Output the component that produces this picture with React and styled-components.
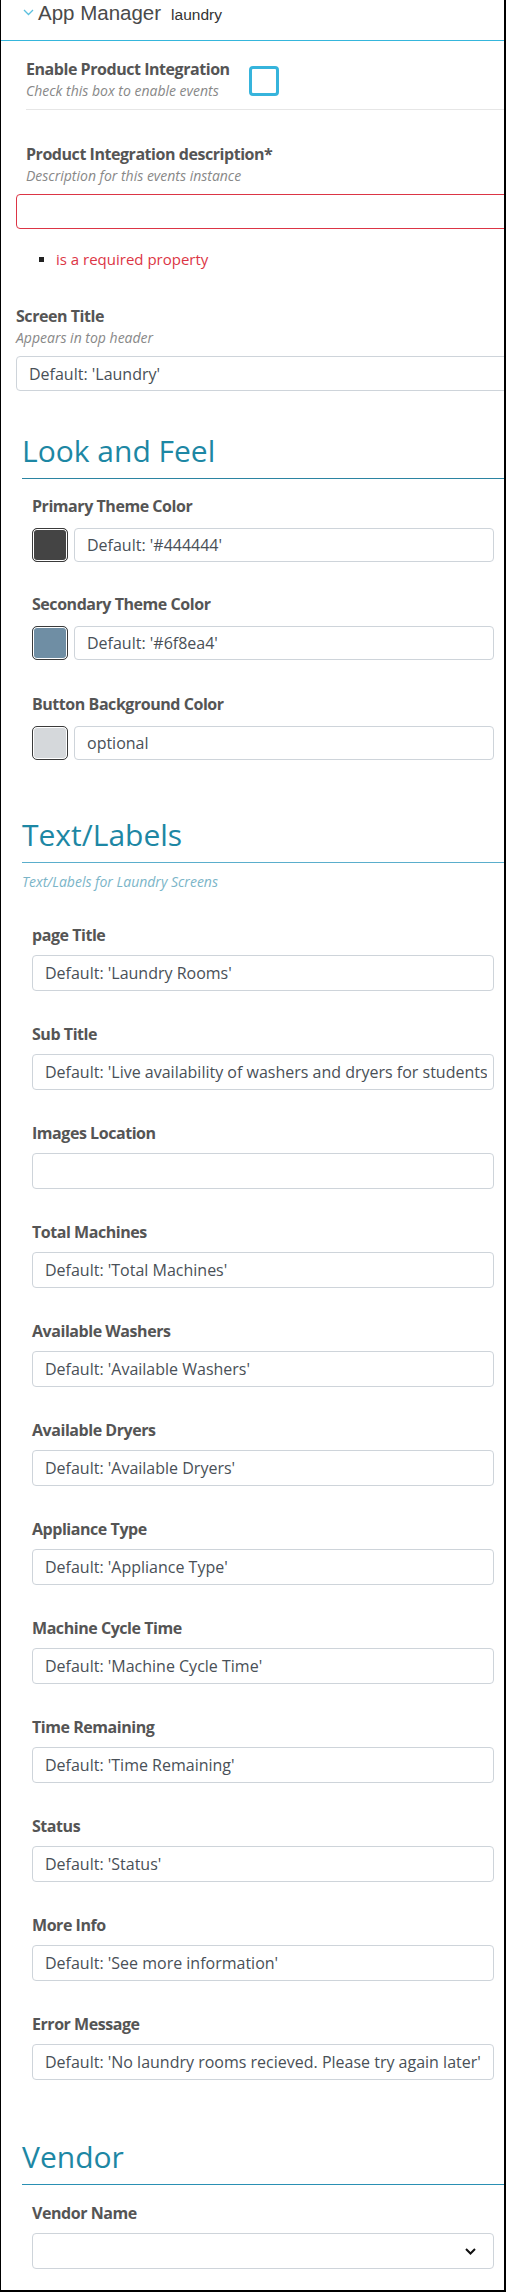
import React from 'react';
import styled, { createGlobalStyle } from 'styled-components';

const GlobalStyle = createGlobalStyle`
  html, body {
    margin: 0;
    padding: 0;
    background: #fff;
  }
  body {
    font-family: 'Open Sans', 'Noto Sans', sans-serif;
  }
  * {
    box-sizing: border-box;
  }
`;

const Frame = styled.div`
  width: 506px;
  height: 2292px;
  border-left: 1px solid #000;
  border-right: 2px solid #000;
  border-bottom: 2px solid #000;
  overflow: hidden;
  background: #fff;
`;

// header bar
const Header = styled.div`
  height: 41px;
  padding: 1px 0 0 22px;
  display: flex;
  align-items: baseline;
  border-bottom: 1px solid #35b6dc;
  font-family: 'Liberation Sans', Arial, sans-serif;
`;

const Chevron = styled.svg`
  width: 11px;
  height: 7px;
  margin-right: 4px;
  align-self: flex-start;
  margin-top: 8px;
`;

const AppTitle = styled.span`
  font-size: 20.5px;
  line-height: 24px;
  color: #4a4a4a;
`;

const AppSub = styled.span`
  font-size: 15.5px;
  line-height: 24px;
  color: #333;
  margin-left: 10px;
`;

const Body = styled.div`
  padding-left: 15px;
`;

const CheckRow = styled.div`
  margin: 18px 0 0 10px;
  padding-bottom: 9px;
  display: flex;
  align-items: flex-start;
  border-bottom: 1px solid #e6e6e6;
`;

const CheckText = styled.div`
  width: 223px;
`;

const CheckBox = styled.span`
  width: 30px;
  height: 30px;
  margin-top: 7px;
  border: 3px solid #36b4dc;
  border-radius: 4px;
`;

const Field = styled.div`
  margin-top: ${(p) => p.$top}px;
`;

const Label = styled.div`
  font-size: 16px;
  font-weight: 700;
  line-height: 20px;
  letter-spacing: -0.45px;
  color: #555;
  padding-left: ${(p) => p.$indent || 0}px;
`;

const Help = styled.div`
  margin-top: 3px;
  font-size: 14px;
  font-style: italic;
  line-height: 18px;
  color: #888;
  padding-left: ${(p) => p.$indent || 0}px;
`;

const TextInput = styled.input`
  display: block;
  flex: 1;
  min-width: 0;
  width: ${(p) => (p.$wide ? 'calc(100% + 30px)' : '100%')};
  height: ${(p) => p.$h ?? 36}px;
  margin-top: ${(p) => p.$mt ?? 10}px;
  padding: 0 6px 0 12px;
  border: 1px solid ${(p) => (p.$error ? '#dc3545' : '#ced4da')};
  border-radius: 4px;
  font-family: 'Open Sans', sans-serif;
  font-size: 16px;
  color: #495057;
  background: #fff;
  outline: none;

  &::placeholder {
    color: #495057;
    opacity: 1;
  }
`;

const ErrorList = styled.ul`
  margin: 20px 0 0;
  padding-left: 40px;
  list-style: square;

  li {
    font-size: 15px;
    line-height: 20px;
    color: #dc3545;
  }
  li::marker {
    color: #222;
    font-size: 14px;
  }
`;

const Section = styled.div`
  margin-top: ${(p) => p.$top}px;
  margin-left: 6px;
`;

const SectionTitle = styled.h2`
  margin: 0;
  padding-bottom: 9px;
  font-size: 30px;
  font-weight: 400;
  line-height: 36px;
  color: #1d87a4;
  border-bottom: 1px solid ${(p) => p.$line || '#2b84a2'};
`;

const SectionNote = styled.div`
  margin-top: 10px;
  font-size: 14px;
  font-style: italic;
  line-height: 18px;
  color: #7bb5c8;
`;

const Fields = styled.div`
  padding: 0 10px 0 10px;
`;

const ColorRow = styled.div`
  margin-top: 12px;
  display: flex;
  gap: 6px;
`;

const Swatch = styled.span`
  flex: 0 0 36px;
  height: 34px;
  border: 1px solid #3a3a3a;
  border-radius: 5px;
  background: ${(p) => p.$color};
  box-shadow: inset 0 0 0 1px #fff;
`;

const SelectBox = styled.div`
  margin-top: 10px;
  height: 36px;
  padding-right: 17px;
  display: flex;
  align-items: center;
  justify-content: flex-end;
  border: 1px solid #ced4da;
  border-radius: 4px;
`;

const colorFields = [
  { label: 'Primary Theme Color', color: '#444444', text: "Default: '#444444'", top: 17 },
  { label: 'Secondary Theme Color', color: '#6f8ea4', text: "Default: '#6f8ea4'", top: 32 },
  { label: 'Button Background Color', color: '#d5d8db', text: 'optional', top: 34 },
];

const textFields = [
  ['page Title', "Default: 'Laundry Rooms'"],
  ['Sub Title', "Default: 'Live availability of washers and dryers for students'"],
  ['Images Location', ''],
  ['Total Machines', "Default: 'Total Machines'"],
  ['Available Washers', "Default: 'Available Washers'"],
  ['Available Dryers', "Default: 'Available Dryers'"],
  ['Appliance Type', "Default: 'Appliance Type'"],
  ['Machine Cycle Time', "Default: 'Machine Cycle Time'"],
  ['Time Remaining', "Default: 'Time Remaining'"],
  ['Status', "Default: 'Status'"],
  ['More Info', "Default: 'See more information'"],
  ['Error Message', "Default: 'No laundry rooms recieved. Please try again later'"],
];

export default function App() {
  return (
    <Frame>
      <GlobalStyle />
      <Header>
        <Chevron viewBox="0 0 11 7">
          <polyline points="1,1 5.5,5.5 10,1" fill="none" stroke="#5bc0de" strokeWidth="1.3" />
        </Chevron>
        <AppTitle>App Manager</AppTitle>
        <AppSub>laundry</AppSub>
      </Header>

      <Body>
        <CheckRow>
          <CheckText>
            <Label>Enable Product Integration</Label>
            <Help>Check this box to enable events</Help>
          </CheckText>
          <CheckBox />
        </CheckRow>

        <Field $top={34}>
          <Label $indent={10}>Product Integration description*</Label>
          <Help $indent={10}>Description for this events instance</Help>
          <TextInput $wide $error $h={35} $mt={9} />
        </Field>
        <ErrorList>
          <li>is a required property</li>
        </ErrorList>

        <Field $top={37}>
          <Label>Screen Title</Label>
          <Help>Appears in top header</Help>
          <TextInput $wide $h={35} $mt={9} placeholder="Default: 'Laundry'" />
        </Field>

        <Section $top={42}>
          <SectionTitle>Look and Feel</SectionTitle>
          <Fields>
            {colorFields.map((f) => (
              <Field key={f.label} $top={f.top}>
                <Label>{f.label}</Label>
                <ColorRow>
                  <Swatch $color={f.color} />
                  <TextInput $h={34} $mt={0} placeholder={f.text} />
                </ColorRow>
              </Field>
            ))}
          </Fields>
        </Section>

        <Section $top={57}>
          <SectionTitle $line="#5aaecc">Text/Labels</SectionTitle>
          <SectionNote>Text/Labels for Laundry Screens</SectionNote>
          <Fields>
            {textFields.map(([label, text], i) => (
              <Field key={label} $top={i === 0 ? 34 : 33}>
                <Label>{label}</Label>
                <TextInput placeholder={text} />
              </Field>
            ))}
          </Fields>
        </Section>

        <Section $top={59}>
          <SectionTitle $line="#2a90b4">Vendor</SectionTitle>
          <Fields>
            <Field $top={18}>
              <Label>Vendor Name</Label>
              <SelectBox>
                <svg width="11" height="7" viewBox="0 0 11 7">
                  <polyline points="1,1 5.5,5.5 10,1" fill="none" stroke="#111" strokeWidth="2" />
                </svg>
              </SelectBox>
            </Field>
          </Fields>
        </Section>
      </Body>
    </Frame>
  );
}
